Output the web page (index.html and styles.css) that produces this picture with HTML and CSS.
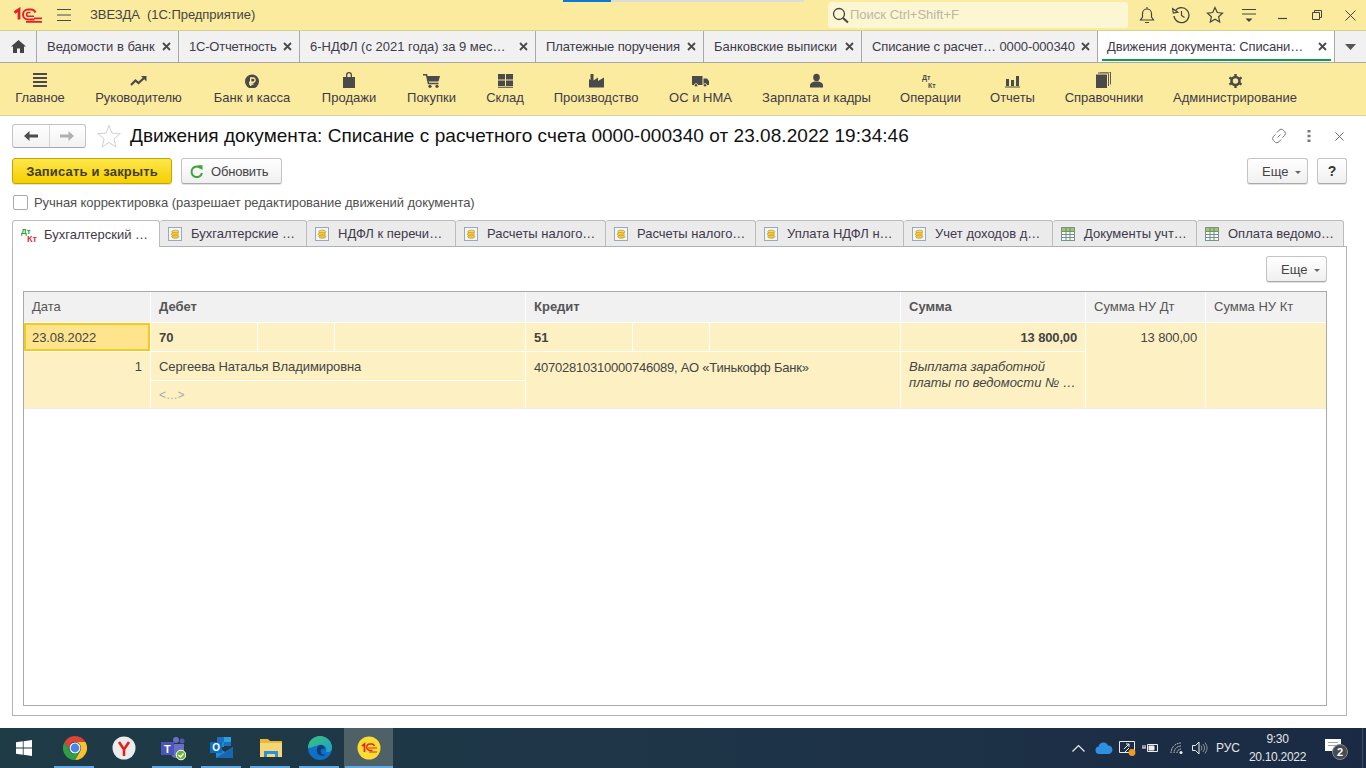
FILE: index.html
```html
<!DOCTYPE html>
<html lang="ru">
<head>
<meta charset="utf-8">
<title>Движения документа</title>
<link rel="stylesheet" href="styles.css">
</head>
<body>
<svg class="defs" width="0" height="0" aria-hidden="true">
  <symbol id="x" viewBox="0 0 9 9"><path d="M1 1l7 7M8 1L1 8" stroke="#4a4a4a" stroke-width="1.800" fill="none"/></symbol>
  <symbol id="coins" viewBox="0 0 14 14"><rect x=".5" y=".5" width="13" height="13" fill="#f2f5fa" stroke="#98a8bd"/><ellipse cx="7.300" cy="4.800" rx="3.600" ry="1.700" fill="#f7d65a" stroke="#c29a25" stroke-width=".7"/><ellipse cx="6.800" cy="7.200" rx="3.600" ry="1.700" fill="#f5cf48" stroke="#c29a25" stroke-width=".7"/><ellipse cx="7.300" cy="9.600" rx="3.600" ry="1.700" fill="#f2c636" stroke="#c29a25" stroke-width=".7"/></symbol>
  <symbol id="sheet" viewBox="0 0 14 14"><rect x=".5" y=".5" width="13" height="13" fill="#f7f7ef" stroke="#7f8f8f"/><rect x="1" y="1" width="12" height="3" fill="#9cc95a"/><path d="M1 4.500h12M1 7.500h12M1 10.500h12M5 1v12M9 1v12" stroke="#6f8f8f" stroke-width="1" fill="none"/></symbol>
</svg>
<div class="loader"><span class="loader-on"></span></div>

<header class="topbar">
  <svg class="logo" width="30" height="16" viewBox="0 0 30 16"><g fill="none" stroke="#e4202a"><path d="M1.500 5.500L6 2.500V12.500" stroke-width="2.800"/><path d="M21.500 12.500H15a5 5 0 0 1 0-10h3a5 5 0 0 1 4.500 3" stroke-width="2"/><path d="M21 9.300h-5.500a1.900 1.900 0 0 1 0-3.800h2" stroke-width="1.500"/><path d="M13 14.800h16M21 11.300h8" stroke-width="1.700"/></g></svg>
  <svg class="burger" width="16" height="12" viewBox="0 0 16 12"><path d="M1 .5h14M1 6h14M1 11.500h14" stroke="#4a4a4a" fill="none"/></svg>
  <span class="app-name">ЗВЕЗДА&nbsp; (1С:Предприятие)</span>
  <div class="search">
    <svg width="17" height="17" viewBox="0 0 17 17"><circle cx="7" cy="7" r="5.500" fill="none" stroke="#444" stroke-width="1.300"/><path d="M11 11l5 4.500" stroke="#444" stroke-width="2" fill="none"/></svg>
    <span>Поиск Ctrl+Shift+F</span>
  </div>
  <div class="sys">
    <span class="sys-i"><svg width="18" height="18" viewBox="0 0 18 18"><path d="M2.500 14h13l-2-3V7.500a4.500 4.500 0 0 0-9 0V11zM7 16.500h4M9 1v2" fill="none" stroke="#444" stroke-width="1.200"/></svg></span>
    <span class="sys-i"><svg width="18" height="18" viewBox="0 0 18 18"><path d="M3.200 5A7.500 7.500 0 1 1 2 10" fill="none" stroke="#444" stroke-width="1.300"/><path d="M.5 2.500l.8 4.500 4.500-.8zM9.500 5v4.500l3 2" fill="none" stroke="#444" stroke-width="1.200"/></svg></span>
    <span class="sys-i"><svg width="18" height="18" viewBox="0 0 18 18"><path d="M9 1.500l2.300 5 5.200.6-3.900 3.600 1.100 5.300L9 13.300 4.300 16l1.100-5.300L1.500 7.100l5.200-.6z" fill="none" stroke="#444" stroke-width="1.200"/></svg></span>
    <span class="sys-i"><svg width="16" height="16" viewBox="0 0 16 16"><path d="M1 2.500h14M1 7h14" stroke="#444" fill="none"/><path d="M4.500 11.500h7L8 15z" fill="#444"/></svg></span>
    <span class="sys-i"><svg width="10" height="10" viewBox="0 0 10 10"><path d="M0 8.500h9" stroke="#444" stroke-width="1.200" fill="none"/></svg></span>
    <span class="sys-i"><svg width="10" height="10" viewBox="0 0 10 10"><path d="M.5 2.500h7v7h-7zM2.500 2.500v-2h7v7h-2" stroke="#444" fill="none"/></svg></span>
    <span class="sys-i sys-last"><svg width="11" height="11" viewBox="0 0 11 11"><path d="M.5.5l10 10M10.500.5l-10 10" stroke="#444" fill="none"/></svg></span>
  </div>
</header>

<nav class="tabs">
  <div class="tab tab-home"><svg width="15" height="13" viewBox="0 0 15 13"><path d="M7.500 0L15 6.500h-2V13H9V8.500H6V13H2V6.500H0z" fill="#444"/></svg></div>
  <div class="tab"><span>Ведомости в банк</span><svg class="tx"><use href="#x"/></svg></div>
  <div class="tab"><span class="ls2">1С-Отчетность</span><svg class="tx"><use href="#x"/></svg></div>
  <div class="tab"><span>6-НДФЛ (с 2021 года) за 9 мес…</span><svg class="tx"><use href="#x"/></svg></div>
  <div class="tab"><span class="ls1">Платежные поручения</span><svg class="tx"><use href="#x"/></svg></div>
  <div class="tab"><span>Банковские выписки</span><svg class="tx"><use href="#x"/></svg></div>
  <div class="tab"><span class="ls1">Списание с расчет… 0000-000340</span><svg class="tx"><use href="#x"/></svg></div>
  <div class="tab tab-active"><span class="ls1">Движения документа: Списани…</span><svg class="tx"><use href="#x"/></svg></div>
  <div class="tab tab-more"><svg width="11" height="6" viewBox="0 0 11 6"><path d="M0 0h11L5.500 6z" fill="#555"/></svg></div>
</nav>

<nav class="sections">
  <a class="sec"><svg width="16" height="16" viewBox="0 0 16 16"><path d="M1 1h14v2H1zM1 5h14v2H1zM1 9h14v2H1zM1 13h14v2H1z" fill="#4a4a4a"/></svg><span>Главное</span></a>
  <a class="sec"><svg width="17" height="16" viewBox="0 0 17 16"><path d="M1 13l4.500-4.500 3 2.500 5.500-5" fill="none" stroke="#4a4a4a" stroke-width="2.200"/><path d="M11 4h5.500v5.500z" fill="#4a4a4a"/></svg><span>Руководителю</span></a>
  <a class="sec"><svg width="16" height="16" viewBox="0 0 16 16"><circle cx="8" cy="9.500" r="7" fill="#4a4a4a"/><path d="M6.700 14V6h2.300a2.100 2.100 0 0 1 0 4.200H5M5 12h4.500" fill="none" stroke="#fbeb9e" stroke-width="1.400"/></svg><span>Банк и касса</span></a>
  <a class="sec"><svg width="14" height="16" viewBox="0 0 14 16"><path d="M1 5h3V3a3 3 0 0 1 6 0v2h3v11H1z" fill="#4a4a4a"/><path d="M5.300 5V3a1.700 1.700 0 0 1 3.400 0v2z" fill="#fbeb9e"/></svg><span>Продажи</span></a>
  <a class="sec"><svg width="17" height="16" viewBox="0 0 17 16"><path d="M0 2.800h3.500L5.500 11.500h10" fill="none" stroke="#4a4a4a" stroke-width="1.500"/><path d="M4 4h13l-1.500 5.500h-10z" fill="#4a4a4a"/><circle cx="7" cy="14.300" r="1.600" fill="#4a4a4a"/><circle cx="14" cy="14.300" r="1.600" fill="#4a4a4a"/></svg><span>Покупки</span></a>
  <a class="sec"><svg width="15" height="16" viewBox="0 0 15 16"><path d="M0 2h7v5.500H0zM8 2h7v5.500H8zM0 8.500h7V14H0zM8 8.500h7V14H8zM0 14.800h15v1H0z" fill="#4a4a4a"/></svg><span>Склад</span></a>
  <a class="sec"><svg width="15" height="16" viewBox="0 0 15 16"><path d="M0 15.500V7l1.500 1V2h3v6.500L9 5.500V9l6-3.500v10z" fill="#4a4a4a"/></svg><span>Производство</span></a>
  <a class="sec"><svg width="17" height="16" viewBox="0 0 17 16"><path d="M0 4h10.500v9H0zM11.500 6.500H15l2 2.500v4h-5.500z" fill="#4a4a4a"/><circle cx="4" cy="13.300" r="1.700" fill="#4a4a4a" stroke="#fbeb9e" stroke-width=".8"/><circle cx="13" cy="13.300" r="1.700" fill="#4a4a4a" stroke="#fbeb9e" stroke-width=".8"/></svg><span>ОС и НМА</span></a>
  <a class="sec"><svg width="13" height="16" viewBox="0 0 13 16"><ellipse cx="6.500" cy="5.500" rx="3.300" ry="3.700" fill="#4a4a4a"/><path d="M0 15.500v-2.500c0-2 2.500-3 4.500-3.500h4c2 .5 4.500 1.500 4.500 3.500v2.500z" fill="#4a4a4a"/></svg><span>Зарплата и кадры</span></a>
  <a class="sec"><svg width="17" height="16" viewBox="0 0 17 16"><text x="0" y="8" class="dk">Дт</text><text x="6" y="15.500" class="dk">Кт</text></svg><span>Операции</span></a>
  <a class="sec"><svg width="15" height="16" viewBox="0 0 15 16"><path d="M1 7h3v7H1zM6 8h3v6H6zM11 4h3v10h-3zM0 14.500h15v1H0z" fill="#4a4a4a"/></svg><span>Отчеты</span></a>
  <a class="sec"><svg width="16" height="16" viewBox="0 0 16 16"><path d="M0 2.500h11V16H0z" fill="#4a4a4a"/><path d="M12.500 1.500v12.500M14.500 0v12.500M2 1h10.500M4 0h10.500" fill="none" stroke="#4a4a4a" stroke-width=".9"/></svg><span>Справочники</span></a>
  <a class="sec"><svg width="15" height="16" viewBox="0 0 15 16"><circle cx="7.500" cy="9" r="4" fill="none" stroke="#4a4a4a" stroke-width="2.600"/><path d="M7.500 2v14M1.400 5.500l12.200 7M13.600 5.500l-12.200 7" stroke="#4a4a4a" stroke-width="2.400" stroke-dasharray="2.200 9.600" fill="none"/></svg><span>Администрирование</span></a>
</nav>

<main class="page">
  <div class="form-head">
    <div class="nav-group">
      <button class="nav-b"><svg width="14" height="10" viewBox="0 0 14 10"><path d="M5.500 0v3.500H14v3H5.500V10L0 5z" fill="#4d4d4d"/></svg></button>
      <button class="nav-b"><svg width="14" height="10" viewBox="0 0 14 10"><path d="M8.500 0v3.500H0v3h8.500V10L14 5z" fill="#b0b0b0"/></svg></button>
    </div>
    <svg class="fav" width="24" height="24" viewBox="0 0 24 24"><path d="M12 1.500l3 7.600 8.300.5-6.400 5.300 2.100 8.100-7-4.500-7 4.500 2.100-8.100L.7 9.600 9 9.100z" fill="#fff" stroke="#cfcfcf"/></svg>
    <h1 class="title">Движения документа: Списание с расчетного счета 0000-000340 от 23.08.2022 19:34:46</h1>
    <div class="head-tools">
      <svg width="16" height="16" viewBox="0 0 16 16"><path d="M6.500 9.500l3-3M6 4.500l2-2.200a3 3 0 0 1 4.500 0l1 1a3 3 0 0 1 0 4.300l-2 2M10 11.500l-2 2.200a3 3 0 0 1-4.500 0l-1-1a3 3 0 0 1 0-4.300l2-2" fill="none" stroke="#777"/></svg>
      <svg class="dots" width="4" height="14" viewBox="0 0 4 14"><path d="M.5 1h3v2.500h-3zM.5 5.700h3v2.500h-3zM.5 10.500h3V13h-3z" fill="#777"/></svg>
      <svg class="close" width="9" height="9" viewBox="0 0 9 9"><path d="M.5.5l8 8M8.500.5l-8 8" stroke="#666" fill="none"/></svg>
    </div>
  </div>
  <div class="cmd">
    <button class="btn btn-primary">Записать и закрыть</button>
    <button class="btn btn-refresh"><svg width="13" height="14" viewBox="0 0 13 14"><path d="M11 3.500A5.300 5.300 0 1 0 12 8" fill="none" stroke="#3aa635" stroke-width="2"/><path d="M7.500 .2h5v5z" fill="#3aa635"/></svg><span>Обновить</span></button>
    <button class="btn btn-more btn-push">Еще<i class="caret"></i></button>
    <button class="btn btn-help">?</button>
  </div>
  <label class="check"><span class="box"></span><span class="check-l">Ручная корректировка (разрешает редактирование движений документа)</span></label>
  <div class="ftabs">
    <div class="ftab ftab-on"><svg width="16" height="16" viewBox="0 0 16 16"><text x="0" y="7" class="dt">Дт</text><text x="6" y="15" class="kt">Кт</text></svg><span>Бухгалтерский …</span></div>
    <div class="ftab"><svg class="fi"><use href="#coins"/></svg><span>Бухгалтерские …</span></div>
    <div class="ftab"><svg class="fi"><use href="#coins"/></svg><span>НДФЛ к перечи…</span></div>
    <div class="ftab"><svg class="fi"><use href="#coins"/></svg><span>Расчеты налого…</span></div>
    <div class="ftab"><svg class="fi"><use href="#coins"/></svg><span>Расчеты налого…</span></div>
    <div class="ftab"><svg class="fi"><use href="#coins"/></svg><span>Уплата НДФЛ н…</span></div>
    <div class="ftab"><svg class="fi"><use href="#coins"/></svg><span>Учет доходов д…</span></div>
    <div class="ftab"><svg class="fi"><use href="#sheet"/></svg><span>Документы учт…</span></div>
    <div class="ftab"><svg class="fi"><use href="#sheet"/></svg><span>Оплата ведомо…</span></div>
  </div>
  <section class="panel">
    <div class="panel-cmd"><button class="btn btn-more">Еще<i class="caret"></i></button></div>
    <div class="table">
      <div class="grid">
        <div class="h">Дата</div>
        <div class="h b">Дебет</div>
        <div class="h b">Кредит</div>
        <div class="h b">Сумма</div>
        <div class="h">Сумма НУ Дт</div>
        <div class="h">Сумма НУ Кт</div>

        <div class="c sel">23.08.2022</div>
        <div class="c split"><span class="p1 b">70</span><span class="p2"></span><span class="p3"></span></div>
        <div class="c split"><span class="p1 b">51</span><span class="p2"></span><span class="p3"></span></div>
        <div class="c r b digits">13 800,00</div>
        <div class="c r span3 digits">13 800,00</div>
        <div class="c span3"></div>

        <div class="c r span2 num">1</div>
        <div class="c name">Сергеева Наталья Владимировна</div>
        <div class="c span2 top acct">40702810310000746089, АО «Тинькофф Банк»</div>
        <div class="c span2 top note">Выплата заработной<br>платы по ведомости № …</div>
        <div class="c ph">&lt;...&gt;</div>
      </div>
    </div>
  </section>
</main>

<footer class="taskbar">
  <div class="start"><svg width="16" height="16" viewBox="0 0 16 16"><path d="M0 2.300l6.800-1v6.300H0zM7.600 1.200L16 0v7.600H7.600zM0 8.400h6.800v6.300l-6.800-1zM7.600 8.400H16V16l-8.400-1.200z" fill="#fff"/></svg></div>
  <div class="apps">
    <div class="app on"><svg width="24" height="24" viewBox="0 0 24 24"><path d="M12 0a12 12 0 0 1 10.400 6H12a6 6 0 0 0-5.200 9L1.600 6A12 12 0 0 1 12 0z" fill="#dc4437"/><path d="M22.400 6A12 12 0 0 1 12 24l5.200-9A6 6 0 0 0 12 6z" fill="#fbc02d"/><path d="M1.600 6l5.200 9a6 6 0 0 0 10.400 0L12 24A12 12 0 0 1 1.600 6z" fill="#2f9e44"/><circle cx="12" cy="12" r="5.500" fill="#fff"/><circle cx="12" cy="12" r="4.400" fill="#4a86e8"/></svg></div>
    <div class="app"><svg width="24" height="24" viewBox="0 0 24 24"><circle cx="12" cy="12" r="11.500" fill="#ececec"/><path d="M7 6l5 7.500L17 6M12 13.500V20" fill="none" stroke="#e0241c" stroke-width="2.600"/></svg></div>
    <div class="app on"><svg width="26" height="26" viewBox="0 0 26 26"><circle cx="16" cy="5" r="3" fill="#6b6fc4"/><circle cx="22" cy="6" r="2.500" fill="#5558af"/><path d="M11 9h13v8a5 5 0 0 1-5 6h-3a5 5 0 0 1-5-6z" fill="#6b6fc4"/><rect x="1" y="7" width="13" height="13" fill="#4b53bc"/><text x="4" y="17.500" class="teams-t">T</text><circle cx="21" cy="20" r="4.800" fill="#6bb52e" stroke="#fff"/><path d="M18.500 20l2 2 3-3.500" fill="none" stroke="#fff" stroke-width="1.300"/></svg></div>
    <div class="app on"><svg width="24" height="24" viewBox="0 0 24 24"><path d="M7 1h14v9H7z" fill="#1b6fc4"/><path d="M14 1h7v5h-7z" fill="#29a3e0"/><path d="M7 6h7v5H7z" fill="#1490d8"/><path d="M6 10l9 6 8-5v11H6z" fill="#1f8ad6"/><path d="M6 22l17-11v11z" fill="#1767b5"/><rect x="0" y="6" width="12" height="11" fill="#0f6cbd"/><text x="2.300" y="15.200" class="ol-o">O</text></svg></div>
    <div class="app on"><svg width="22" height="20" viewBox="0 0 22 20"><path d="M0 1h8l2 2h12v16H0z" fill="#e8b93a"/><path d="M0 5h22v14H0z" fill="#f7d774"/><path d="M4 19v-6h14v6h-3v-3H7v3z" fill="#2e8fe0"/></svg></div>
    <div class="app on"><svg width="24" height="24" viewBox="0 0 24 24"><defs><linearGradient id="eg" x1="0" y1="0" x2="1" y2="1"><stop offset="0" stop-color="#39c46f"/><stop offset="1" stop-color="#1fa0cf"/></linearGradient></defs><circle cx="12" cy="12" r="12" fill="#0f6fc4"/><path d="M0 12A12 12 0 0 1 24 12c0 3-3 5-6 4 2-4-2-8-7-7-5 1-8 3-11 3z" fill="url(#eg)"/><path d="M9 13c-1 5 3 8 9 6 -5 0-6-3-5-5 1-2 3-1 4 0 0-3-2-5-4-5s-4 2-4 4z" fill="#0b3d78"/></svg></div>
    <div class="app on active"><svg width="24" height="24" viewBox="0 0 24 24"><circle cx="12" cy="12" r="11.500" fill="#fbdc33"/><g fill="none" stroke="#dc2a22"><path d="M5 10l2.500-2v8" stroke-width="1.800"/><path d="M15.500 14.500h-2.500a3.200 3.200 0 0 1 0-6.500h1.500a3 3 0 0 1 3 2" stroke-width="1.400"/><path d="M11 12h9M12 16h8" stroke-width="1.200"/></g></svg></div>
  </div>
  <div class="tray">
    <svg class="t-chev" width="13" height="8" viewBox="0 0 13 8"><path d="M.5 7.500l6-6 6 6" fill="none" stroke="#eee" stroke-width="1.200"/></svg>
    <svg class="t-cloud" width="18" height="12" viewBox="0 0 18 12"><path d="M4 12a3.800 3.800 0 0 1-.5-7.500A5 5 0 0 1 13 3.500 4.300 4.300 0 0 1 14 12z" fill="#2f8fe0"/></svg>
    <svg class="t-ico" width="17" height="16" viewBox="0 0 17 16"><path d="M.5 1.500h15v11H.5z" fill="none" stroke="#eee"/><path d="M5 9l5-5M7 4h3v3M10 8L6 12" fill="none" stroke="#eee"/><circle cx="13" cy="12.500" r="3.400" fill="#f39a1e"/></svg>
    <svg class="t-bat" width="16" height="10" viewBox="0 0 16 10"><path d="M5.500 1.500h10v7h-10z" fill="none" stroke="#eee"/><path d="M7 3h5v4H7zM0 5h4M1 2v3M3 2v3" fill="#eee" stroke="#eee"/></svg>
    <svg class="t-wifi" width="14" height="12" viewBox="0 0 14 12"><path d="M1 11a10 10 0 0 1 10-10M4 11a7 7 0 0 1 7-7M7 11a4 4 0 0 1 4-4" fill="none" stroke="#d8d8d8" stroke-dasharray="1.500 .8"/><circle cx="11" cy="10.500" r="1.500" fill="#eee"/></svg>
    <svg class="t-vol" width="16" height="14" viewBox="0 0 16 14"><path d="M.5 4.500h3l3.500-3.500v12L3.500 9.500h-3z" fill="none" stroke="#eee"/><path d="M9 4.500a4 4 0 0 1 0 5M11 3a6.500 6.500 0 0 1 0 8M13 1.500a9 9 0 0 1 0 11" fill="none" stroke="#8a939e"/></svg>
    <span class="lang">РУС</span>
    <div class="clock"><span>9:30</span><span>20.10.2022</span></div>
    <div class="notif"><svg width="16" height="15" viewBox="0 0 16 15"><path d="M0 0h16v12h-4l-3 3v-3H0z" fill="#fff"/><path d="M3 3.500h10M3 6.500h10" stroke="#9aa" fill="none"/></svg><span class="badge">2</span></div>
    <div class="show-desk"></div>
  </div>
</footer>
</body>
</html>
```
FILE: styles.css
```css
* { box-sizing: border-box; }
html, body { margin: 0; height: 100%; }
body {
  width: 1366px; height: 768px; overflow: hidden; position: relative;
  display: flex; flex-direction: column;
  font: 13px/16px "Liberation Sans", Arial, sans-serif; color: #3b3b3b; background: #fff;
}
.defs { position: absolute; }
button { font: inherit; color: inherit; margin: 0; }
svg { display: block; flex: none; }
svg text { font-family: "Liberation Sans", Arial, sans-serif; }

.loader { position: absolute; left: 563px; top: 0; width: 241px; height: 2px; background: #dcdcdc; }
.loader-on { display: block; width: 48px; height: 2px; background: #0a78d4; }

.topbar { height: 31px; flex: none; display: flex; align-items: center; background: #fbeb9e; border-bottom: 1px solid #d8cf8f; padding-left: 12px; }
.logo { margin-left: 1px; }
.burger { margin-left: 13px; }
.app-name { margin-left: 18px; color: #444; letter-spacing: -.05px; }
.search { margin-left: auto; width: 300px; height: 26px; background: #fdf6d2; border-radius: 3px; display: flex; align-items: center; gap: 1px; padding-left: 4px; color: #bbb7a2; }
.sys { display: flex; margin-left: 2px; }
.sys-i { width: 34px; display: flex; justify-content: center; align-items: center; }
.sys-last { width: 32px; }

.tabs { height: 32px; flex: none; display: grid; grid-template-columns: 37px 142px 121px 236px 168px 158px 236px 237px 1fr; background: #f1f1f1; border-bottom: 1px solid #a8a8a8; }
.tab { display: flex; align-items: center; padding: 0 7px 0 10px; border-right: 1px solid #a8a8a8; white-space: nowrap; color: #3f3a4a; position: relative; }
.tab-home { justify-content: center; padding: 0; }
.tab-more { border-right: 0; justify-content: center; padding: 0; }
.tx { width: 9px; height: 9px; margin-left: auto; }
.ls1 { letter-spacing: -.12px; }
.ls2 { letter-spacing: -.2px; }
.tab-active { background: #fff; padding-left: 9px; padding-right: 7px; }
.tab-active::after { content: ""; position: absolute; left: 4px; right: 3px; bottom: 1px; height: 2px; background: #0f9b50; }

.sections { height: 53px; flex: none; display: grid; grid-template-columns: 48px 87px 78px 54px 49px 36px 84px 63px 107px 59px 43px 78px 122px; column-gap: 31px; padding: 9px 0 0 16px; background: #fbeb9e; border-bottom: 1px solid #dcd39a; }
.sec { display: flex; flex-direction: column; align-items: center; gap: 2px; color: #3f3a4a; white-space: nowrap; justify-self: center; width: max-content; height: 34px; }
.dk { font-size: 7px; font-weight: 700; fill: #4a4a4a; }

.page { flex: 1; min-height: 0; padding: 8px 19px 12px 12px; display: flex; flex-direction: column; }
.form-head { height: 24px; flex: none; display: flex; align-items: center; }
.nav-group { width: 74px; height: 24px; display: flex; border: 1px solid #c4c4c4; border-bottom-color: #a8a8a8; border-radius: 3px; background: linear-gradient(#fff, #f2f2f2); }
.nav-b { flex: 1; border: 0; background: none; padding: 0; display: flex; align-items: center; justify-content: center; }
.nav-b + .nav-b { border-left: 1px solid #d4d4d4; }
.fav { margin-left: 11px; }
.title { margin: 0 0 0 9px; font-size: 19px; letter-spacing: .05px; line-height: 24px; font-weight: 400; color: #111; white-space: nowrap; }
.head-tools { margin-left: auto; display: flex; align-items: center; margin-right: 3px; }
.dots { margin-left: 20px; }
.close { margin-left: 24px; }

.cmd { display: flex; gap: 9px; margin-top: 10px; height: 26px; flex: none; }
.btn { height: 26px; padding: 2px 0 0; border: 1px solid #c4c4c4; border-bottom-color: #a9a9a9; border-radius: 3px; background: linear-gradient(#fff, #f0f0f0); display: flex; align-items: center; justify-content: center; color: #444; box-shadow: 0 1px 0 #e2e2e2; }
.btn-primary { width: 160px; background: linear-gradient(#fde74c, #f5cf00); border-color: #c9a400; font-weight: 700; color: #453e1c; letter-spacing: .16px; }
.btn-refresh { width: 101px; gap: 8px; justify-content: flex-start; padding-left: 8px; letter-spacing: -.2px; }
.btn-more { width: 61px; gap: 7px; justify-content: flex-start; padding-left: 14px; }
.btn-push { margin-left: auto; }
.btn-help { width: 30px; font-weight: 700; font-size: 14px; color: #333; padding-top: 0; }
.caret { width: 0; height: 0; border: 3px solid transparent; border-top: 3px solid #666; border-bottom: 0; }

.check { display: flex; align-items: center; gap: 6px; margin: 10px 0 0 1px; height: 17px; flex: none; color: #505050; }
.check-l { letter-spacing: -.06px; }
.box { width: 15px; height: 15px; border: 1px solid #aaa; border-radius: 2px; background: #fff; }

.ftabs { display: grid; grid-template-columns: 148px 147px 149px 150px 150px 148px 149px 144px 147px; width: 1332px; height: 27px; margin-top: 9px; flex: none; position: relative; z-index: 1; }
.ftab { display: flex; align-items: center; gap: 9px; padding: 1px 0 0 8px; background: #ebebeb; border: 1px solid #bcbcbc; border-left: 0; border-bottom: 1px solid #b0b0b0; border-radius: 3px 3px 0 0; white-space: nowrap; color: #3f3a4a; }
.ftab-on { background: #fff; border-left: 1px solid #bcbcbc; border-bottom: 0; gap: 7px; }
.fi { width: 14px; height: 14px; }
.dt { font-size: 8px; fill: #2a9a3a; font-weight: 700; }
.kt { font-size: 9px; fill: #d0343a; font-weight: 700; }

.panel { flex: 1; min-height: 0; margin-top: -1px; border: 1px solid #b3b3b3; padding: 9px 19px 9px 10px; display: flex; flex-direction: column; background: #fff; }
.panel-cmd { display: flex; justify-content: flex-end; height: 26px; flex: none; }
.table { flex: 1; margin-top: 9px; border: 1px solid #a9a9a9; }
.grid { display: grid; grid-template-columns: 126px 374px 374px 184px 119px 120px; grid-template-rows: 30px 28px 28px 27px; gap: 1px; border-bottom: 1px solid #ededed; }
.h { background: #f1f1f1; display: flex; align-items: center; padding: 0 8px; color: #555; }
.b { font-weight: 700; }
.c { background: #fdf1c4; padding: 1px 8px 0; display: flex; align-items: center; color: #444; white-space: nowrap; }
.r { justify-content: flex-end; }
.digits { letter-spacing: -.15px; }
.name { letter-spacing: -.1px; }
.acct { letter-spacing: -.225px; }
.sel { background: #fee48c; border: 2px solid #f8c81c; padding: 1px 6px 0; letter-spacing: -.1px; }
.split { padding: 0; background: #fff; gap: 1px; align-items: stretch; }
.split span { background: #fdf1c4; display: flex; align-items: center; padding-top: 1px; }
.p1 { width: 106px; padding-left: 8px; }
.p2 { width: 76px; }
.p3 { flex: 1; }
.span3 { grid-row: span 3; align-items: flex-start; padding-top: 7px; }
.span2 { grid-row: span 2; }
.num { align-items: flex-start; padding-top: 7px; }
.top { align-items: flex-start; padding-top: 8px; }
.note { display: block; font-style: italic; white-space: normal; padding-top: 7px; }
.ph { color: #aaa; font-size: 12px; letter-spacing: .4px; }

.taskbar { height: 40px; flex: none; display: flex; align-items: stretch; background: linear-gradient(90deg, #1f3b46, #1e3548 50%, #1a2a44); color: #e6e6e6; font-size: 12px; }
.start { width: 50px; display: flex; align-items: center; justify-content: center; padding-right: 3px; }
.apps { display: flex; }
.app { width: 49px; display: flex; align-items: center; justify-content: center; position: relative; }
.app.on::after { content: ""; position: absolute; left: 4px; right: 5px; bottom: 0; height: 2px; background: #62a8e0; }
.app.active { background: #4d6167; }
.app.active::after { left: 1px; right: 0; }
.teams-t { font-size: 11px; font-weight: 700; fill: #fff; }
.ol-o { font-size: 10px; font-weight: 700; fill: #fff; }
.tray { margin-left: auto; display: flex; align-items: center; }
.t-cloud { margin-left: 10px; }
.t-ico { margin-left: 6px; }
.t-bat { margin-left: 6px; }
.t-wifi { margin-left: 12px; }
.t-vol { margin-left: 8px; }
.lang { margin-left: 8px; }
.clock { display: flex; flex-direction: column; align-items: center; margin-left: 9px; line-height: 18px; width: 57px; letter-spacing: -.3px; }
.notif { position: relative; width: 16px; height: 15px; margin: 0 21px 4px 19px; }
.badge { position: absolute; left: 7px; top: 5px; width: 16px; height: 16px; border-radius: 50%; background: #444b52; border: 1px solid #888; color: #fff; font-size: 11px; font-weight: 700; line-height: 14px; text-align: center; }
.show-desk { width: 1px; height: 40px; background: #3b4a62; margin-right: 3px; }
```
